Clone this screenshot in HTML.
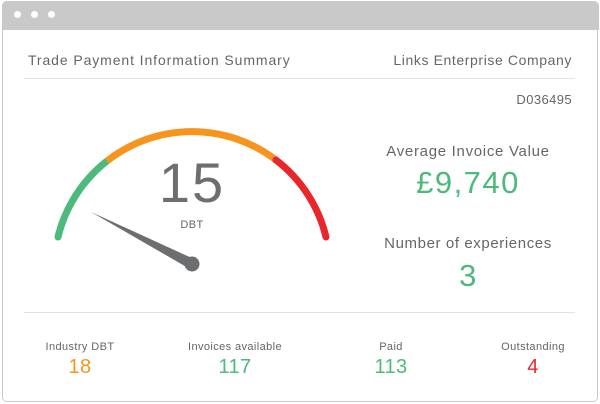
<!DOCTYPE html>
<html><head><style>
body{margin:0;width:600px;height:404px;background:#fff;font-family:"Liberation Sans",sans-serif;position:relative;overflow:hidden}
.frame{position:absolute;left:2px;top:1px;width:594px;height:399px;border:1.5px solid #c9c9c9;border-radius:5px;background:#fff}
.bar{position:absolute;left:2px;top:1px;width:597px;height:29px;background:#c9c9c9;border-radius:5px 5px 0 0}
.dot{position:absolute;top:11px;width:7px;height:7px;border-radius:50%;background:#fff}
.t{position:absolute;color:#666;white-space:nowrap;letter-spacing:0.4px}
.hr{position:absolute;left:24px;width:551px;height:1px;background:#e3e3e3}
.c{transform:translateX(-50%);text-align:center}
</style></head><body>
<div class="frame"></div>
<div class="bar"></div>
<div class="dot" style="left:14px"></div><div class="dot" style="left:31px"></div><div class="dot" style="left:48px"></div>
<div class="t" style="left:28px;top:52px;font-size:14px;letter-spacing:0.9px">Trade Payment Information Summary</div>
<div class="t" style="right:28px;top:52px;font-size:14px;letter-spacing:0.6px">Links Enterprise Company</div>
<div class="hr" style="top:78px"></div>
<div class="t" style="right:28px;top:92px;font-size:13px">D036495</div>
<svg style="position:absolute;left:0;top:0" width="600" height="404">
<g fill="none" stroke-width="7" stroke-linecap="round">
<path d="M58 237 A138 138 0 0 1 107 161" stroke="#4cb97d"/>
<path d="M107 161 A138 138 0 0 1 276 160" stroke="#f7941d" stroke-linecap="butt"/>
<path d="M276 160 A138 138 0 0 1 326 237" stroke="#e8262b"/>
</g>
<polygon points="91,212 194,259 190,269" fill="#6d6e70"/>
<circle cx="192" cy="264" r="7.5" fill="#6d6e70"/>
</svg>
<div class="t c" style="left:192px;top:150px;font-size:56px;font-weight:300;color:#6d6e70;letter-spacing:2px">15</div>
<div class="t c" style="left:192px;top:219px;font-size:11px">DBT</div>
<div class="t c" style="left:468px;top:143px;font-size:15px;letter-spacing:0.7px">Average Invoice Value</div>
<div class="t c" style="left:468px;top:165px;font-size:31px;color:#4cb97d;letter-spacing:1.5px">£9,740</div>
<div class="t c" style="left:468px;top:235px;font-size:15px;letter-spacing:0.6px">Number of experiences</div>
<div class="t c" style="left:468px;top:258px;font-size:31px;color:#4cb97d">3</div>
<div class="hr" style="top:312px"></div>
<div class="t c" style="left:80px;top:341px;font-size:11px">Industry DBT</div>
<div class="t c" style="left:80px;top:356px;font-size:20px;color:#f7941d">18</div>
<div class="t c" style="left:235px;top:341px;font-size:11px">Invoices available</div>
<div class="t c" style="left:235px;top:356px;font-size:20px;color:#4cb97d">117</div>
<div class="t c" style="left:391px;top:341px;font-size:11px">Paid</div>
<div class="t c" style="left:391px;top:356px;font-size:20px;color:#4cb97d">113</div>
<div class="t c" style="left:533px;top:341px;font-size:11px">Outstanding</div>
<div class="t c" style="left:533px;top:356px;font-size:20px;color:#e8262b">4</div>
</body></html>
